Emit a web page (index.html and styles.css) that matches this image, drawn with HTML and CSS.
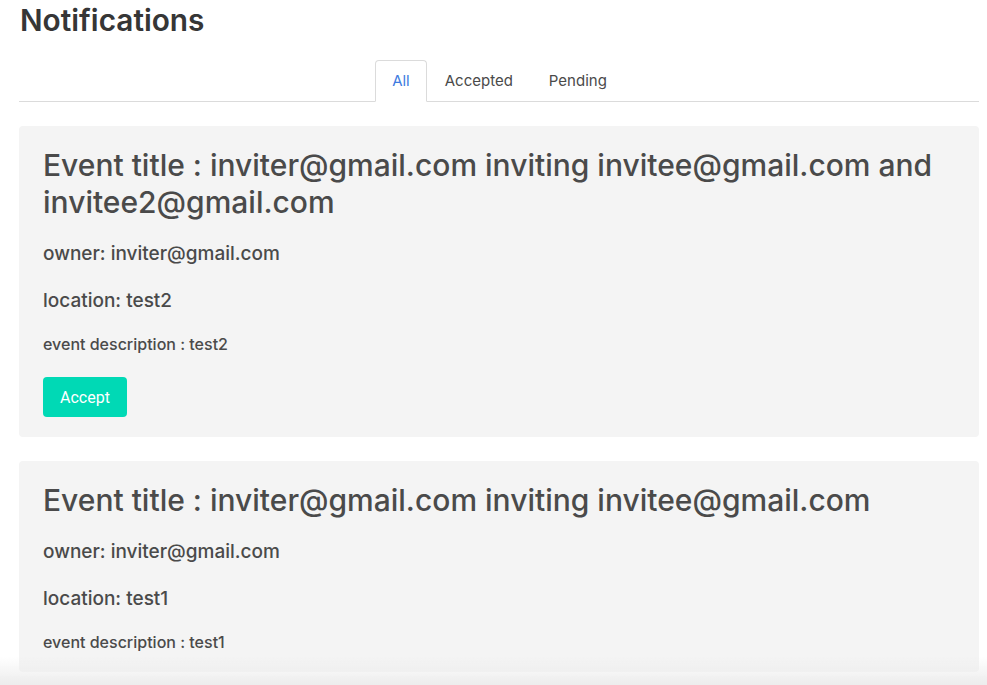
FILE: index.html
```html
<!DOCTYPE html>
<html>
<head>
<meta charset="utf-8">
<link rel="stylesheet" href="styles.css">
</head>
<body>
<div class="page">
  <h1 class="page-title">Notifications</h1>
  <div class="tabs">
    <ul>
      <li class="tab active">All</li>
      <li class="tab">Accepted</li>
      <li class="tab">Pending</li>
    </ul>
  </div>
  <div class="list">
    <div class="card">
      <h2 class="card-title">Event title : inviter@gmail.com inviting invitee@gmail.com and invitee2@gmail.com</h2>
      <p class="meta">owner: inviter@gmail.com</p>
      <p class="meta">location: test2</p>
      <p class="desc">event description : test2</p>
      <button class="btn">Accept</button>
    </div>
    <div class="card">
      <h2 class="card-title">Event title : inviter@gmail.com inviting invitee@gmail.com</h2>
      <p class="meta">owner: inviter@gmail.com</p>
      <p class="meta">location: test1</p>
      <p class="desc">event description : test1</p>
    </div>
  </div>
</div>
<div class="fade"></div>
</body>
</html>
```

FILE: styles.css
```css
html, body {
  margin: 0;
  padding: 0;
  background: #fff;
  font-family: Inter, "Noto Sans", sans-serif;
  color: #4a4a4a;
}
.page {
  padding: 0 8px 0 19px;
}
.page-title {
  margin: 0;
  font-size: 29.8px;
  line-height: 40px;
  font-weight: 600;
  color: #363636;
  padding-left: 1px;
}
.tabs {
  margin-top: 20px;
  border-bottom: 1px solid #dbdbdb;
  display: flex;
  justify-content: center;
}
.tabs ul {
  display: flex;
  list-style: none;
  margin: 0 0 -1px 2px;
  padding: 0;
}
.tab {
  padding: 0 17px;
  height: 40px;
  line-height: 40px;
  font-size: 15px;
  color: #4a4a4a;
  border: 1px solid transparent;
  border-radius: 4px 4px 0 0;
}
.tab.active {
  padding: 0 16px;
  color: #3e7be0;
  border-color: #dbdbdb;
  border-bottom-color: #fff;
  background: #fff;
}
.list {
  margin-top: 24px;
  display: flex;
  flex-direction: column;
  gap: 24px;
}
.card {
  background: #f4f4f4;
  border-radius: 4px;
  padding: 21px 24px 20px 24px;
}
.card-title {
  margin: 0;
  font-size: 30px;
  line-height: 37px;
  font-weight: 500;
  color: #4a4a4a;
}
.meta {
  margin: 0;
  font-size: 19px;
  line-height: 24px;
  font-weight: 500;
  margin-top: 23px;
}
.card-title + .meta {
  margin-top: 21px;
}
.desc {
  margin: 21px 0 0;
  font-size: 16px;
  line-height: 20px;
  font-weight: 500;
}
.btn {
  margin-top: 23px;
  display: block;
  background: #00d9b5;
  color: #fff;
  border: none;
  border-radius: 4px;
  height: 40px;
  padding: 0 17px;
  font-family: Roboto, Inter, sans-serif;
  font-size: 16px;
  cursor: pointer;
}
.fade {
  position: fixed;
  left: 0;
  right: 0;
  bottom: 0;
  height: 28px;
  background: linear-gradient(to bottom, rgba(236,236,236,0), #ececec);
  pointer-events: none;
}
```
